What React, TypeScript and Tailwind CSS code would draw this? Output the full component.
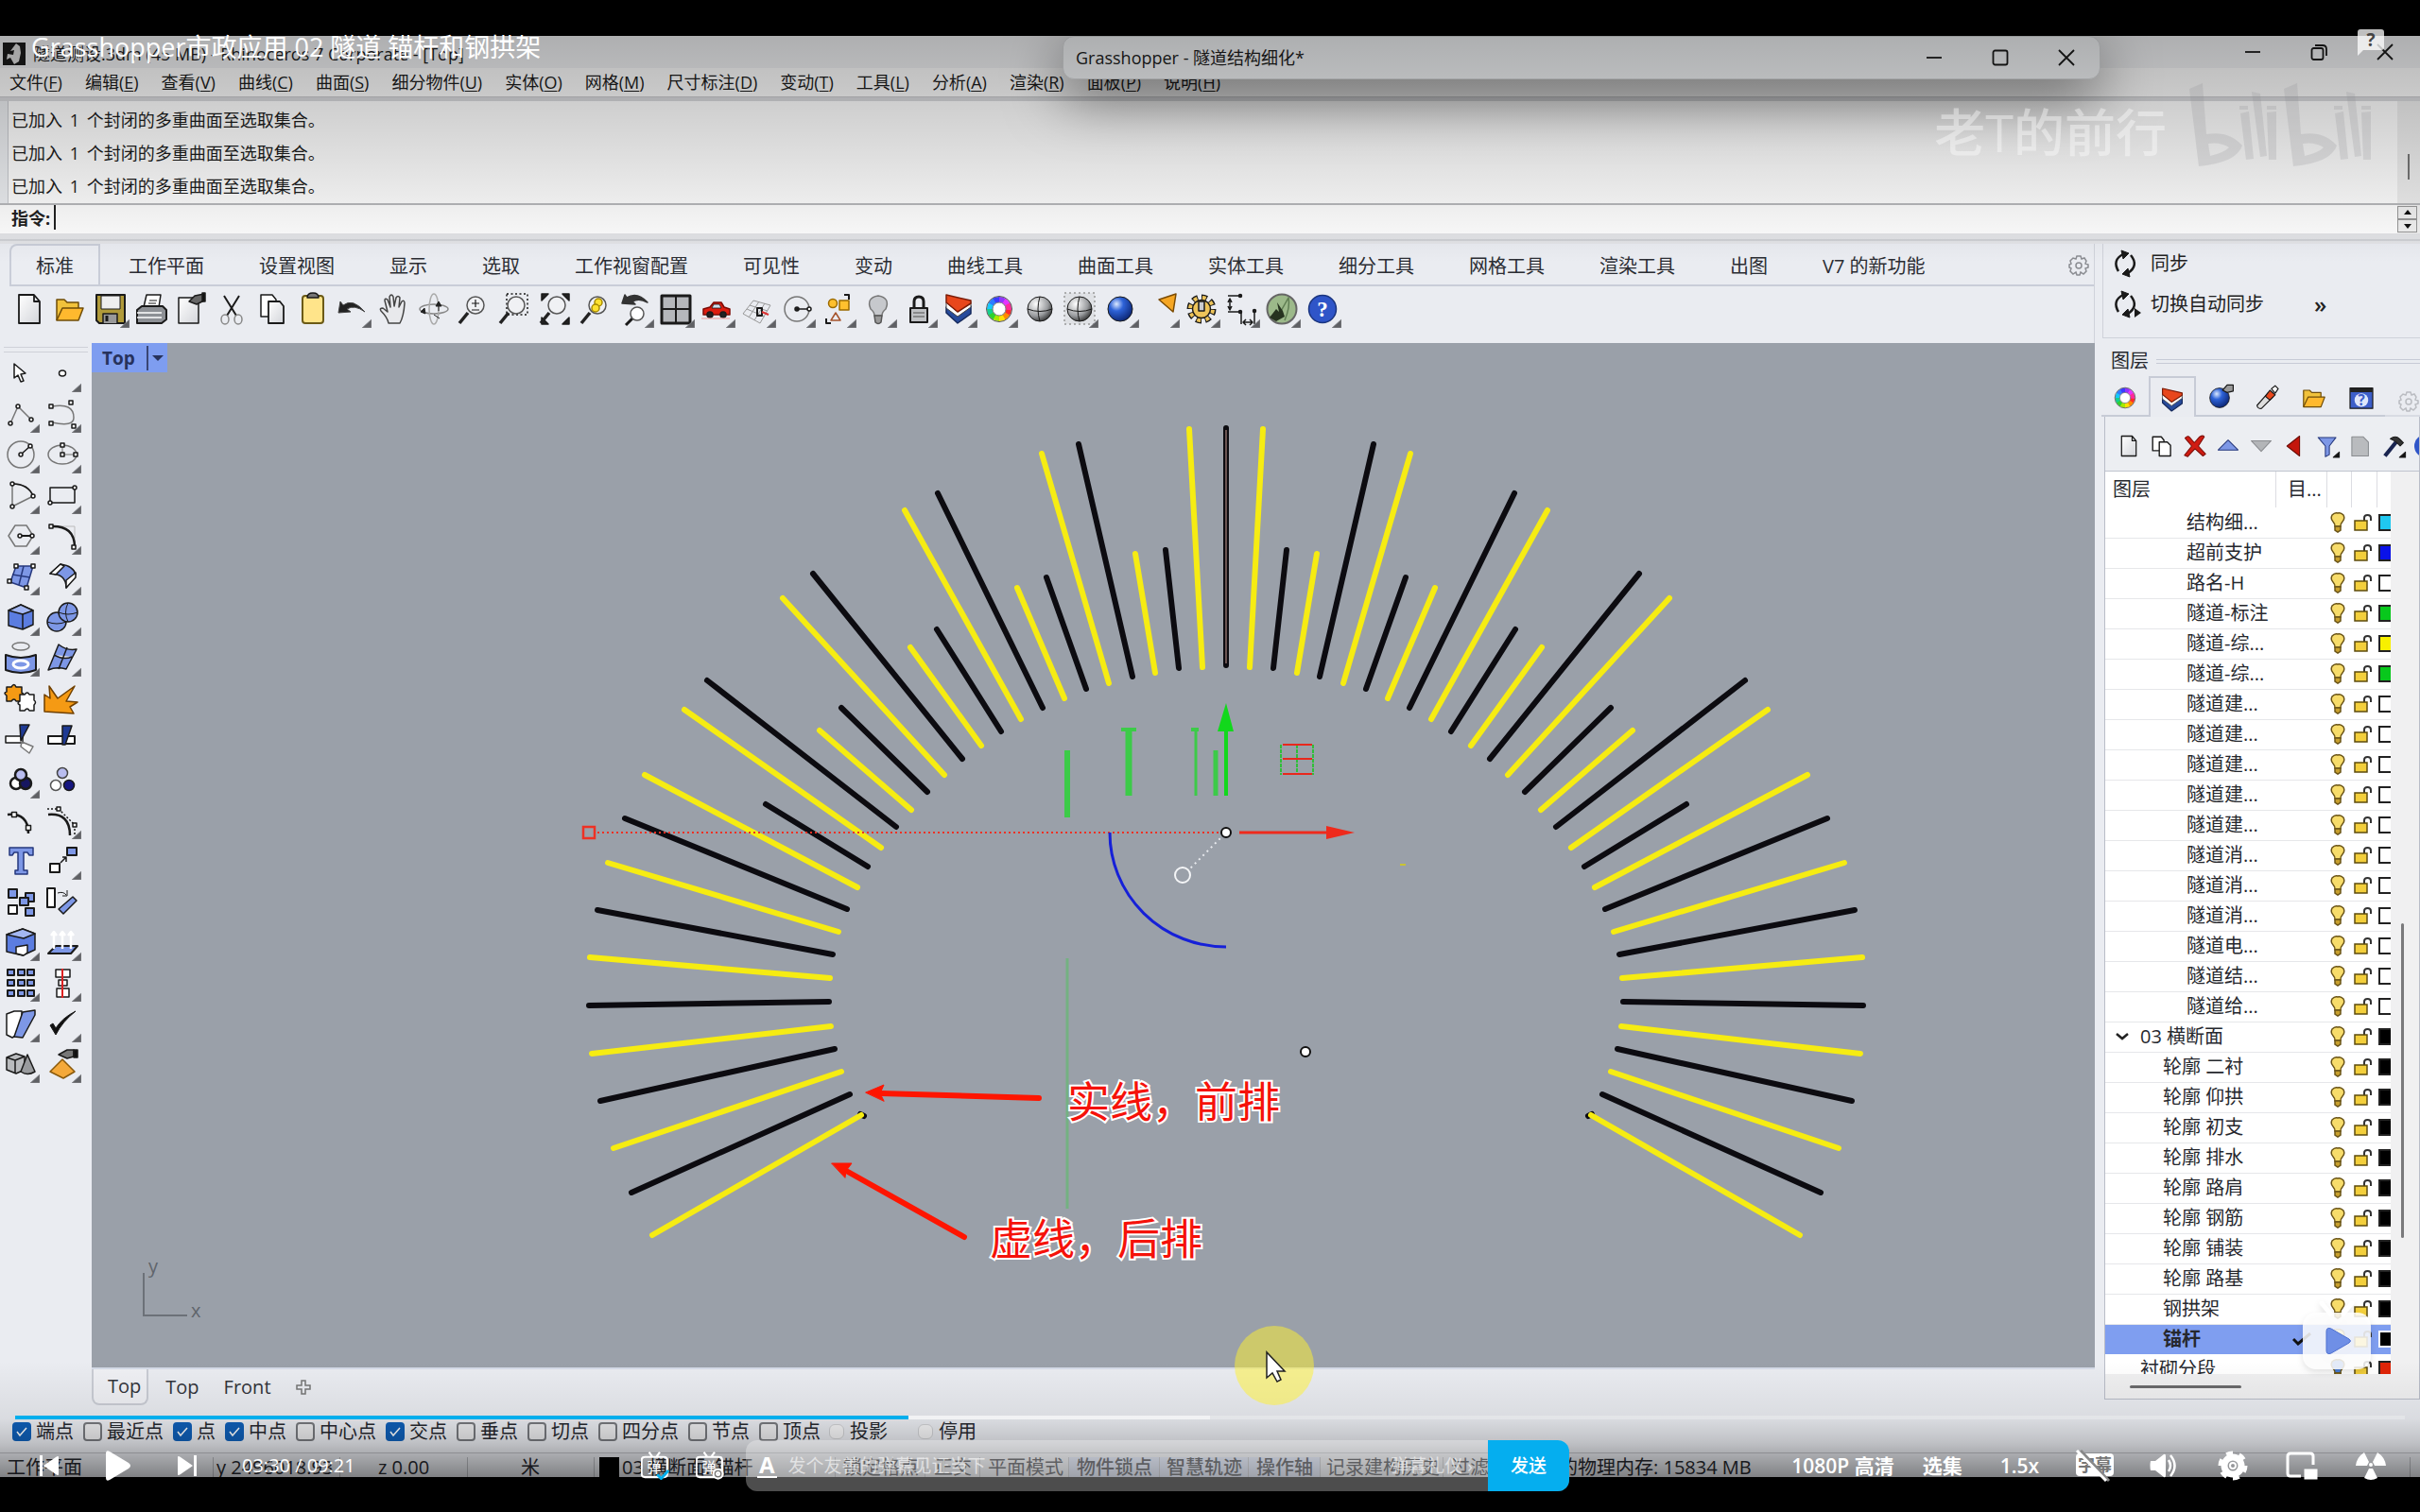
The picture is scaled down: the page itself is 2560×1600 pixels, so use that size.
import React from 'react';

type Kids = { children?: React.ReactNode };

/* ---------- icon helpers ---------- */

function Glyph({ children, corner = false, className = 'size-10' }: Kids & { corner?: boolean; className?: string }) {
  return (
    <svg viewBox="-20 -20 40 40" className={className + ' shrink-0'} fill="none" stroke="#1a1a1a" strokeWidth="1.5" strokeLinejoin="round" aria-hidden="true">
      {children}
      {corner && <path d="M20 11v9H10z" fill="#5f6064" stroke="#8a8b90" strokeWidth=".8" />}
    </svg>
  );
}

const wheel = ['#ff2a2a', '#ff8a00', '#ffe000', '#a6e800', '#2fd12f', '#14cf8f', '#14c8ff', '#2f7dff', '#3b3bff', '#8f35ff', '#e335ff', '#ff2a9a'];
const ColorWheel = () => (
  <>
    {wheel.map((c, i) => (
      <circle key={c} r="10" stroke={c} strokeWidth="6" pathLength={12} strokeDasharray="1.2 10.8" strokeDashoffset={-i} />
    ))}
    <circle r="13.5" stroke="#555" strokeWidth="1" />
    <circle r="7" fill="#fff" stroke="#777" strokeWidth="1" />
  </>
);
const Page = () => <path d="M-11-15H5l6 7v23h-22zM5-15v7h6" fill="url(#paper)" strokeWidth="1.8" />;
const Loupe = () => (
  <>
    <path d="M-6 4l-9 11" stroke="#222" strokeWidth="3.5" />
    <circle cx="2" cy="-4" r="9" fill="#f4f5f7" fillOpacity=".6" stroke="#555" />
  </>
);
const Layers = () => (
  <>
    <path d="M-13-2L-1 7 13-3V5L-1 15-13 4z" fill="#274b9c" stroke="#15295c" />
    <path d="M-13-7L-1 3 13-7V-2L-1 8-13-1z" fill="#fff" stroke="#444" strokeWidth="1" />
    <path d="M-13-15L13-9V-6L-1 3-13-7z" fill="#e8471c" stroke="#7b1c08" />
  </>
);
const Ball = ({ fill }: { fill: string }) => <circle r="13" fill={fill} strokeWidth="1" />;
const GrayBall = () => (
  <>
    <Ball fill="url(#grayBall)" />
    <path d="M-13 0Q0 5 13 0M0-13Q-4 0 0 13" strokeWidth="1" />
  </>
);
const Folder = () => (
  <>
    <path d="M-14 12V-10h8l3 3H9v6" fill="#f1c23b" stroke="#6f4c07" />
    <path d="M-14 12l6-13h22L9 12z" fill="#ffb92e" stroke="#6f4c07" />
  </>
);
const Cog = ({ fill, stroke = '#1a1a1a' }: { fill: string; stroke?: string }) => (
  <>
    <circle r="11.5" stroke={stroke} strokeWidth="8" pathLength={32} strokeDasharray="2.4 1.6" />
    <circle r="11" stroke={fill} strokeWidth="6" pathLength={32} strokeDasharray="1.6 2.4" strokeDashoffset="-.4" />
    <circle r="9.5" fill={fill} />
    <path d="M-3-8h6v10h-6z" fill="#c9cbd0" stroke={stroke} />
  </>
);
const Sq = ({ x, y, s = 4, fill = '#fff' }: { x: number; y: number; s?: number; fill?: string }) => (
  <rect x={x - s / 2} y={y - s / 2} width={s} height={s} fill={fill} />
);
const Dot = ({ x, y }: { x: number; y: number }) => <circle cx={x} cy={y} r="2" fill="#fff" />;

type Tool = [string, boolean, React.ReactNode];

const topTools: Tool[] = [
  ['新建', false, <Page />],
  ['打开', false, <Folder />],
  ['保存', true, <><path d="M-15-15h30v30h-27l-3-3z" fill="#b09a3a" strokeWidth="2" /><path d="M-10-14h20V0h-20z" fill="#eee" strokeWidth="1" /><path d="M-8 15V5h15v10" fill="#999" /><path d="M-4 7v6" strokeWidth="3" /></>],
  ['打印', false, <><path d="M-8-2L-5-15H10L8-2" fill="#fff" /><path d="M-15 1l5-4h22l4 4v10l-5 4h-26z" fill="#8d9095" strokeWidth="2" /><path d="M-15 4H11M-15 9H11" stroke="#fff" /><path d="M-2-9h8M-3-6h8" strokeWidth="1" /></>],
  ['属性', false, <><path d="M-13-12H8v27h-21z" fill="url(#paper)" /><path d="M-2-8l6-6 10-2v7L6-5z" fill="#666" /><path d="M12-17h3v9h-3z" fill="#111" /></>],
  ['剪切', false, <><path d="M-8-14L5 7M8-14L-5 7" strokeWidth="2" /><ellipse cx="-7" cy="11" rx="4" ry="5" stroke="#888" /><ellipse cx="7" cy="11" rx="4" ry="5" stroke="#888" /></>],
  ['复制', false, <><path d="M-12-15H0l4 5V8h-16z" fill="#fff" /><path d="M-4-8H8l4 5v18H-4z" fill="url(#paper)" strokeWidth="1.8" /></>],
  ['粘贴', false, <><rect x="-11" y="-14" width="22" height="29" rx="3" fill="#ffe48a" stroke="#6b5a16" strokeWidth="2" /><path d="M-6-12q0-5 6-5t6 5z" fill="#777" /></>],
  ['撤销', true, <path d="M-15 4l2-12 3 4Q0-12 13 3 2-5-6 0l4 3z" fill="#222" stroke="#444" strokeWidth="1" />],
  ['平移', false, <path d="M-5 15q-1-6-8-13-2-3 2-3l5 4L-9-9q0-3 3-1l3 8-1-11q2-4 4 0L1-3l2-9q2-3 4 0L6-2l3-6q3-2 3 2-1 14-5 21z" fill="#e8e9ec" stroke="#444" />],
  ['旋转视图', false, <><ellipse rx="15" ry="5" stroke="#888" /><ellipse rx="5" ry="16" stroke="#aaa" /><path d="M-9 5l-5-2 4-4zM5-7v9M5-8l-3 5h6zM0 6l6 4" fill="#222" stroke="#222" strokeWidth="1" /></>],
  ['缩放', false, <><Loupe /><path d="M-2-6h8M2-10v8M-2 1h8" strokeWidth="1.2" /></>],
  ['框选缩放', false, <><rect x="-8" y="-16" width="22" height="22" strokeDasharray="2 2.5" /><Loupe /></>],
  ['缩放至范围', false, <><path d="M-14-9v-7h7zM15-9v-7H8zM-14 9v7h7zM15 9v7H8z" fill="#222" /><Loupe /></>],
  ['缩放选取', false, <><Loupe /><circle cx="3" cy="-7" r="4" fill="#ffe12e" stroke="#a78b00" /><circle cx="0" cy="-1" r="4" fill="#ffe12e" stroke="#a78b00" /></>],
  ['视图撤销', true, <><path d="M-14-6l3-9 2 3Q2-19 13-7 4-12-3-8l3 3z" fill="#333" stroke="#333" /><path d="M-3 10l-7 7" strokeWidth="3" /><circle cx="2" cy="5" r="7" fill="#fff" stroke="#555" /></>],
  ['四视图', true, <><rect x="-15" y="-14" width="30" height="29" fill="#b5b7bb" strokeWidth="3" /><path d="M0-14v29M-15 0h30" strokeWidth="2" /></>],
  ['车', true, <><path d="M-14 6V0l7-2 4-5h8l3 5 6 2v6z" fill="#dd1d10" stroke="#7d0a04" /><path d="M-3-5h6l2 4h-10z" fill="#cfe0ee" strokeWidth=".8" /><circle cx="-7" cy="6" r="3" fill="#222" /><circle cx="7" cy="6" r="3" fill="#222" /><path d="M-16 10h30" stroke="#e99" strokeWidth="1" /></>],
  ['工作平面', true, <><path d="M-15 5L-4-9l18 5L3 15zM-11 0L8 8M-8-4l19 6M2-8L-9 9M8-6L-3 12" stroke="#999" strokeWidth="1" /><path d="M0-1h5v8H0z" strokeWidth="2" /><path d="M5 3l7 3" stroke="#d33" strokeWidth="2" /></>],
  ['圆', true, <><circle r="13" stroke="#777" /><circle r="2" fill="#222" /><path d="M0 0h13" /><Dot x={13} y={0} /></>],
  ['物件', true, <><path d="M-12 10v5h5M12-10v-5H7" strokeWidth="2" /><circle cx="-5" cy="-6" r="4.5" fill="#ffc02e" stroke="#9b6a00" /><path d="M2-9h10v10H2z" fill="#ffc02e" stroke="#9b6a00" /><path d="M-2 4l5 8h-10z" stroke="#a5532b" /></>],
  ['显示物件', true, <><path d="M-4 7q0-4-4-7-5-12 8-14 13 2 8 14-4 3-4 7z" fill="#c6c8cc" stroke="#777" /><path d="M-4 7h8l-1 7q-3 3-6 0z" fill="#999" stroke="#555" /></>],
  ['锁定', true, <><path d="M-5 0v-8q0-5 5-5t5 5v8" strokeWidth="3" /><rect x="-9" y="-1" width="18" height="15" fill="#bfc1c4" strokeWidth="2" /><path d="M-6 4H6M-6 8H6" stroke="#777" /></>],
  ['图层', true, <Layers />],
  ['颜色', true, <ColorWheel />],
  ['着色', false, <GrayBall />],
  ['着色选取', true, <><rect x="-16" y="-17" width="32" height="33" stroke="#999" strokeDasharray="2 3" fill="#dfe1e5" /><GrayBall /></>],
  ['渲染', true, <Ball fill="url(#blueBall)" />],
  ['灯光', true, <path d="M-2-10L16-16 13 3z" fill="#f5a623" stroke="#7a4a00" />],
  ['选项', true, <Cog fill="#edc45a" />],
  ['尺寸', true, <><path d="M-14-14h12M-14 3h12M-12-10v9M-14-7l2-4 2 4M-14-3l2 4 2-4M0 3v13M14 3v13M2 14h10M5 11l-3 3 3 3M9 11l3 3-3 3" /><g fill="#222"><circle cx="-1" cy="-14" r="1.5" /><circle cx="-1" cy="3" r="1.5" /><circle cx="14" cy="2" r="1.5" /></g></>],
  ['Grasshopper', true, <><circle r="15.5" fill="#9cb98a" stroke="#666" strokeWidth="2" /><path d="M-2 4L7-12Q9-2 3 12" stroke="#5f7d52" /><path d="M-13 9L-6 0-3 3-5-7 1 2 3 8-6 13z" fill="#26331f" stroke="none" /></>],
  ['说明', true, <><circle r="14.5" fill="#2f55c8" stroke="#1b357f" /><text y="8" textAnchor="middle" fontSize="23" fontWeight="bold" fill="#fff" stroke="none" fontFamily="Liberation Serif">?</text></>],
];

const B = '#7d97e6';
const sideTools: Tool[] = [
  ['选取', false, <path d="M-7-10L-7 5l4-3 3 7 3-1-3-7 5-1z" fill="#fff" />],
  ['点', true, <ellipse rx="3.5" ry="3" fill="#fff" />],
  ['多重直线', true, <><path d="M-11 10L-3-8 11 6" stroke="#777" /><Dot x={-11} y={10} /><Dot x={-3} y={-8} /><Dot x={11} y={6} /></>],
  ['曲线', true, <><path d="M-11-8Q12-12 12 4 12 14-11 9" stroke="#777" /><Sq x={-12} y={-8} /><Sq x={9} y={-12} /><Sq x={-12} y={10} /><Sq x={12} y={13} /></>],
  ['圆', true, <><circle r="14" stroke="#777" /><path d="M0 0L10-9" /><Dot x={0} y={0} /><Dot x={10} y={-9} /></>],
  ['椭圆', true, <><ellipse rx="15" ry="10" stroke="#777" /><path d="M0-10v10h14" stroke="#999" /><Sq x={0} y={-10} /><Sq x={0} y={0} /><Sq x={14} y={0} /></>],
  ['圆弧', true, <><path d="M-9 12v-24Q8-12 13 1z" stroke="#777" /><path d="M-9-12Q8-12 13 1" /><Dot x={-9} y={12} /><Dot x={-9} y={-12} /><Dot x={13} y={1} /></>],
  ['矩形', true, <><rect x="-13" y="-8" width="26" height="16" /><Dot x={-13} y={8} /><Dot x={13} y={-8} /></>],
  ['多边形', true, <><path d="M-13 0l7-11H6l7 11-7 11H-6z" stroke="#777" /><path d="M-1 0h12" strokeWidth="2" /><Dot x={-1} y={0} /><Dot x={12} y={0} /></>],
  ['圆角', true, <><path d="M-12-10h25v20" stroke="#bbb" strokeWidth="1" /><path d="M-12-10Q13-11 13 12" strokeWidth="2.5" /><Sq x={-12} y={-10} /><Sq x={12} y={12} /></>],
  ['曲面', true, <><path d="M-5-11L13-11 6 12-11 6z" fill={B} stroke="#26387d" /><path d="M3-11L-2 9M-9-2L10 1" stroke="#26387d" /><Sq x={-5} y={-11} /><Sq x={13} y={-11} /><Sq x={6} y={12} /><Sq x={-12} y={5} /></>],
  ['放样', true, <><path d="M-13-3L-2-13Q12-11 14-2L4 12Q4-3-13-3z" fill={B} /><path d="M-13-3L-2-13l4 2-9 9zM4 12V4l10-8v5z" fill="#fff" /></>],
  ['立方体', true, <><path d="M-13-7L0-13 13-7V8L2 13-13 9z" fill="#5b7de0" /><path d="M-13-7L0-13 13-7 2-3z" fill="#a3b7f2" /><path d="M2-3v16" /></>],
  ['球体', true, <><circle cx="-6" cy="5" r="10" fill={B} /><circle cx="6" cy="-5" r="10" fill={B} /><path d="M-16 5q10 4 20 0M-4-5q10 4 20 0M6-15q-5 10 0 20" strokeWidth="1" /></>],
  ['投影', true, <><ellipse cy="-12" rx="9" ry="4" stroke="#777" /><path d="M-16-3q16 6 32 0v16q-16 6-32 0z" fill={B} strokeWidth="2" /><ellipse cy="7" rx="8" ry="4" fill={B} stroke="#fff" strokeWidth="3" /></>],
  ['网格', true, <path d="M-4-14Q5-7 15-9L4 12Q-6 9-15 13zM-9-3Q2 3 10-1M5-11L-4 12" fill={B} />],
  ['组合', false, <><path d="M-15-12h5q3-5 5 0h6v6q4 2 0 5v4h-6q-2-4-5 0h-5v-6q-4-3 0-4z" fill="#f59a14" /><path d="M-1-4h5q3-4 5 0h5v6q3 2 0 5v6H9q-2-4-5 0h-5v-6q-4-2 0-4z" fill="#fff" /></>],
  ['炸开', false, <path d="M-19 14v-18l6 4-1-13 9 13L13-13 4 3l12 1-8 5 4 7z" fill="#f59a14" stroke="#704000" />],
  ['修剪', false, <><path d="M-16-3H2v7h-18z" fill="#fff" /><path d="M-1-15h10L0 2z" fill="#1f3a93" /><path d="M1 3l12 5-4 7-9-7z" fill="#fff" stroke="#777" /></>],
  ['分割', false, <><path d="M-15-3h28v8h-28z" fill="#fff" strokeWidth="2" /><path d="M0-14h10L3 6H0z" fill="#1f3a93" /></>],
  ['群组', true, <><circle cx="-5" cy="4" r="6" fill="#fff" strokeWidth="2.5" /><circle cx="5" cy="4" r="6" fill="#161660" strokeWidth="2.5" /><circle cy="-5" r="6" fill="#b9bdf0" strokeWidth="2.5" /></>],
  ['取消群组', false, <><circle cx="-7" cy="6" r="5.5" fill="#fff" stroke="#555" /><circle cx="7" cy="6" r="5.5" fill="#161680" /><circle cy="-7" r="5.5" fill="#b9bdf0" stroke="#444" /></>],
  ['编辑点', false, <><path d="M-14-6Q8-8 8 14" strokeWidth="2.5" /><Sq x={-7} y={-6} s={5} /><Sq x={8} y={8} s={5} /></>],
  ['控制点', true, <><path d="M-15-6Q8-8 8 16" strokeWidth="2.5" /><path d="M-16-12H-4L13 5v12" strokeDasharray="2 2" /><Sq x={-4} y={-12} /><Sq x={13} y={5} /></>],
  ['文字', false, <path d="M-12-14h25v8h-4l-2-3H3v19h4v4H-6v-4h3V-9h-4l-2 3h-3z" fill={B} stroke="#26387d" />],
  ['移动', true, <><rect x="-13" y="3" width="10" height="9" fill="#fff" strokeWidth="2" /><rect x="5" y="-14" width="10" height="8" fill={B} strokeWidth="2" /><path d="M-2 2L4-4M0-4h4v5" /></>],
  ['复制', false, <><rect x="-13" y="-13" width="9" height="9" fill={B} strokeWidth="2" /><rect x="5" y="-9" width="9" height="9" fill={B} strokeWidth="2" /><rect x="-1" y="-4" width="9" height="8" fill={B} strokeWidth="2" /><rect x="-13" y="4" width="9" height="9" fill="#fff" strokeWidth="2" /><rect x="5" y="7" width="9" height="8" fill={B} strokeWidth="2" /></>],
  ['旋转', false, <><rect x="-16" y="-14" width="8" height="20" fill="#fff" strokeWidth="2" /><path d="M-4 8L11-5l4 4L1 13z" fill={B} /><path d="M-5-9q6-2 9 2M5-12v6h-5" strokeWidth="1" /></>],
  ['布尔', true, <><path d="M-15-8L2-14 15-9V8L2 14-15 10z" fill="#5b7de0" /><path d="M-15-8L2-14 15-9 3-4z" fill="#a3b7f2" /><path d="M-5 5L7 3v8l-4 3-8-2z" fill="#fff" /></>],
  ['投影曲线', true, <><path d="M-15 12l8-8h23l-7 8z" fill={B} strokeWidth="2" /><path d="M-9 7v-16M0 7v-16M9 7v-16M-12-7l3-4 3 4M-3-7l3-4 3 4M6-7l3-4 3 4" stroke="#fff" strokeWidth="2.5" /></>],
  ['阵列', true, <>{[-11, 0, 11].map(y => [-11, 0, 10].map(x => <rect key={x + ',' + y} x={x - 3} y={y - 3} width="7" height="6" fill={B} strokeWidth="2" />))}</>],
  ['对齐', true, <><rect x="-7" y="-14" width="15" height="8" fill="#fff" /><rect x="-4" y="-3" width="9" height="6" fill="#fff" /><rect x="-6" y="6" width="13" height="9" fill="#fff" /><path d="M0-15v31" stroke="#d22" strokeWidth="2" /></>],
  ['变形', true, <><path d="M-15-10l8-3h8v22l-10 6-6-3z" fill="#fff" /><path d="M2-12l13-2v5L2 15l-9-1z" fill={B} /></>],
  ['检查', true, <path d="M-13 2l6 10Q0-2 14-13 0-6-7 5l-3-5z" fill="#111" strokeWidth="1" />],
  ['实体', true, <><path d="M-15-7l10-4 9 3v14l-9 4-10-4z" fill="#b9bbbe" /><path d="M-15-7l9 3 10-4M-6-4v14" /><path d="M7-10L15 8Q7 13 0 8z" fill="#999b9e" /></>],
  ['工具', true, <><path d="M-13 8L0-5 13 8 1 15z" fill="#f4a93a" stroke="#8a5a0c" /><path d="M-4-10l9-5h7v7l-7 2z" fill="#777" /><path d="M12-15h4v8h-4z" fill="#111" /></>],
];

/* ---------- viewport drawing ---------- */

// Rod ends measured from the arch's axis of symmetry: outer x, outer y, inner x, inner y.
const blackRods = [
  [139, 265, 108, 483], [339, 70, 216, 498], [413, 316, 322, 521], [664, 161, 422, 555], [667, 412, 518, 600],
  [952, 308, 607, 650], [887, 555, 689, 711], [1196, 505, 761, 776], [1060, 733, 825, 849], [1386, 759, 874, 927],
  [1449, 929, 906, 1011], [1468, 1105, 915, 1098], [1441, 1281, 902, 1185], [1370, 1449, 866, 1269],
];
const yellowRods = [
  [85, 41, 54, 480], [210, 271, 163, 491], [424, 87, 270, 511], [481, 335, 372, 539], [741, 191, 472, 577],
  [727, 444, 564, 625], [1021, 353, 650, 680], [937, 597, 726, 744], [1248, 560, 794, 813], [1340, 679, 850, 887],
  [1424, 842, 892, 968], [1465, 1016, 913, 1054], [1462, 1194, 910, 1142], [1412, 1367, 887, 1227], [1321, 1528, 841, 1307],
];
const AXIS = 1200;
const px = (x: number) => Math.round(x * 0.4592);
const py = (y: number) => Math.round(y * 0.574 + 67);

function Rods({ data, color }: { data: number[][]; color: string }) {
  return (
    <g stroke={color} strokeWidth="6" strokeLinecap="round">
      {data.map(([a, b, c, d]) => (
        <g key={a + '-' + b}>
          <line x1={AXIS - px(a)} y1={py(b)} x2={AXIS - px(c)} y2={py(d)} />
          <line x1={AXIS + px(a)} y1={py(b)} x2={AXIS + px(c)} y2={py(d)} />
        </g>
      ))}
    </g>
  );
}

function Scene() {
  return (
    <svg viewBox="0 0 2119 1082" preserveAspectRatio="xMinYMin meet" className="absolute inset-0 h-full w-full" fill="none" role="img" aria-label="隧道锚杆视图">
      <path d="M813 816l4 2M1587 816l-4 2" stroke="#0c0b10" strokeWidth="6" strokeLinecap="round" />
      <Rods data={blackRods} color="#0c0b10" />
      <Rods data={yellowRods} color="#f6ec12" />
      <path d="M1200 90V341" stroke="#0c0b10" strokeWidth="6" strokeLinecap="round" />
      <path d="M1200 92V339" stroke="#8a6e68" strokeWidth="1.5" />

      <path d="M535 518H1194" stroke="#ee3124" strokeWidth="2" strokeDasharray="2 3" />
      <rect x="520" y="512" width="12" height="12" stroke="#ee3124" strokeWidth="2.5" />
      <path d="M1214 518H1310" stroke="#ee2a1c" strokeWidth="3" />
      <path d="M1306 511L1336 518 1306 525z" fill="#ee2a1c" />
      <path d="M1200 479V405" stroke="#12d81c" strokeWidth="4" />
      <path d="M1191 411L1200 381 1208 411z" fill="#12d81c" />
      <g stroke="#3ccb48">
        <path d="M1032 431V502" strokeWidth="6" />
        <path d="M1097 408V479" strokeWidth="7" />
        <path d="M1089 409H1105M1163 409H1171" strokeWidth="4" />
        <path d="M1168 408V479" strokeWidth="3" />
        <path d="M1189 431V479" strokeWidth="5" />
        <path d="M1032 651V916" strokeWidth="3" strokeOpacity=".4" />
      </g>
      <path d="M1077 518A123 121 0 0 0 1200 639" stroke="#1620d8" strokeWidth="3" />
      <path d="M1198 520L1160 558" stroke="#e8eaee" strokeWidth="2" strokeDasharray="2 4" />
      <circle cx="1154" cy="563" r="8" stroke="#f4f5f7" strokeWidth="2" />
      <circle cx="1200" cy="518" r="5" fill="#fff" stroke="#111" strokeWidth="2" />
      <circle cx="1284" cy="750" r="5" fill="#fff" stroke="#111" strokeWidth="2" />
      <path d="M1258 425V457M1275 425V457M1292 425V457" stroke="#2fbf3a" strokeWidth="2" strokeDasharray="4 1" />
      <path d="M1260 425H1291M1260 440H1291M1260 456H1291" stroke="#e8281c" strokeWidth="2" />
      <path d="M1384 552h6" stroke="#c9c432" strokeWidth="2" />

      <g stroke="#ff1500" strokeWidth="6" strokeLinecap="round" fill="#ff1500">
        <path d="M835 794L1002 799M800 877L923 946" />
        <path d="M819 793L838 785 834 794 838 802zM783 868L804 868 798 876 797 883z" strokeWidth="1" />
      </g>
      <g fontSize="45" fill="#f5120a" stroke="#fff" strokeWidth="4" paintOrder="stroke">
        <text x="1032" y="820">实线，前排</text>
        <text x="950" y="965">虚线，后排</text>
      </g>

      <path d="M55 984V1029H101" stroke="#6c7178" strokeWidth="2" />
      <g fontSize="20" fill="#60656c">
        <text x="60" y="984">y</text>
        <text x="105" y="1031">x</text>
      </g>
    </svg>
  );
}

/* ---------- application chrome ---------- */

const menus = [['文件', 'F'], ['编辑', 'E'], ['查看', 'V'], ['曲线', 'C'], ['曲面', 'S'], ['细分物件', 'U'], ['实体', 'O'], ['网格', 'M'], ['尺寸标注', 'D'], ['变动', 'T'], ['工具', 'L'], ['分析', 'A'], ['渲染', 'R'], ['面板', 'P'], ['说明', 'H']];
const tabs = ['标准', '工作平面', '设置视图', '显示', '选取', '工作视窗配置', '可见性', '变动', '曲线工具', '曲面工具', '实体工具', '细分工具', '网格工具', '渲染工具', '出图', 'V7 的新功能'];

function WindowButtons({ restore = false }: { restore?: boolean }) {
  return (
    <div className="flex items-center">
      {['最小化', restore ? '还原' : '最大化', '关闭'].map((n, i) => (
        <button key={n} aria-label={n} className="flex h-8 w-[70px] items-center justify-center">
          <svg viewBox="0 0 18 18" className="size-[18px]" fill="none" stroke="#1a1a1a" strokeWidth="1.8">
            {i === 0 && <path d="M1 9h16" />}
            {i === 1 && !restore && <rect x="1.5" y="1.5" width="15" height="15" rx="2" />}
            {i === 1 && restore && <><rect x="1.5" y="5" width="12" height="12" rx="2" /><path d="M5 2h8q4 0 4 4v7" /></>}
            {i === 2 && <path d="M1 1l16 16M17 1L1 17" />}
          </svg>
        </button>
      ))}
    </div>
  );
}

function Header() {
  return (
    <header>
      <div className="flex h-[34px] items-center justify-between bg-[#eff0f2]">
        <div className="flex items-center gap-2 pt-1 pl-[3px]">
          <svg viewBox="0 0 24 24" className="size-6"><path d="M0 0h24v24H0z" fill="#1a1a1a" /><path d="M14 1l4 3 1 7-2 9-5 3-4-7-4 2 1-6 6 1 1-5-4 1z" fill="#ddd" /></svg>
          <span className="text-[18px] leading-6 text-[#1c1c1c]">隧道测设.3dm (45 MB) - Rhinoceros 7 Corporate - [Top]</span>
        </div>
        <div className="pr-[2px]"><WindowButtons restore /></div>
      </div>
      <nav className="flex h-[30px] items-center gap-6 bg-[#fbfbfb] pl-[10px]">
        {menus.map(([name, key]) => (
          <button key={name} className="text-[18px] leading-6 whitespace-nowrap text-[#1c1c1c]">{name}(<u className="underline-offset-2">{key}</u>)</button>
        ))}
      </nav>
      <div className="h-[5px] border-t border-[#c9cacc] bg-[#d9dadd]" />
      <div className="flex h-[108px] bg-[#eceef1] pl-2">
        <div className="min-w-0 flex-1 border-l border-[#c8cacf] bg-white pt-[3px] pl-[3px] text-[18px] leading-[35px] text-[#1c1c1c]">
          {[0, 1, 2].map(i => <p key={i}>已加入 <span className="mx-[3px]">1</span> 个封闭的多重曲面至选取集合。</p>)}
        </div>
        <div className="w-6 bg-[#efefef] pt-[56px] pl-[11px]"><div className="h-[27px] w-[2px] bg-[#777]" /></div>
      </div>
      <div className="flex h-8 border-t-2 border-[#b9babd] bg-white pl-2">
        <label htmlFor="cmd" className="pl-1 text-[18px] leading-[28px] font-bold text-[#222]">指令:</label>
        <span className="ml-1 h-[26px] w-[2px] bg-[#222]" />
        <input id="cmd" className="min-w-0 flex-1 bg-transparent outline-none" />
        <div className="w-6 bg-[#f2f2f2] pt-px">
          {['M4 9h8L8 4z', 'M4 5h8L8 10z'].map(d => (
            <button key={d} aria-label="步进" className="flex h-[14px] w-[21px] items-center justify-center border border-[#999]">
              <svg viewBox="0 0 16 14" className="h-[14px] w-4"><path d={d} fill="#111" /></svg>
            </button>
          ))}
        </div>
      </div>
      <div className="h-[11px] bg-[#e3e4e7]"><div className="h-2 border-b-2 border-[#cfd1d5]" /></div>
    </header>
  );
}

function OutlineGear() {
  return (
    <svg viewBox="0 0 24 24" className="size-6" fill="none" stroke="#8b8d92" strokeWidth="1.5">
      <circle cx="12" cy="12" r="3" />
      <path d="M10 2h4l1 3 3-1 2 3-1 3 3 1v3l-3 1 1 3-3 3-3-2-1 3h-3l-1-3-3 2-3-3 1-3-2-1v-3l2-1-1-3 3-3 3 1z" />
    </svg>
  );
}

function Ribbon() {
  return (
    <div className="h-[105px] shrink-0 border-r border-[#cfd2da] pl-[10px]">
      <div className="flex h-[45px] items-end border-b-2 border-[#c9cdd8] pr-1">
        <div className="flex flex-1 gap-[2px]">
          {tabs.map((t, i) => (
            <button key={t} className={(i === 0 ? '-mb-[2px] rounded-tl-lg border-2 border-b-0 border-[#c9cdd8] bg-[#ebedf2] px-[26px] pt-[2px]' : 'px-7 pt-1') + ' h-[43px] text-[20px] leading-6 whitespace-nowrap text-[#2b2d33]'}>{t}</button>
          ))}
        </div>
        <button aria-label="工具列选项" className="mb-2"><OutlineGear /></button>
      </div>
      <div className="flex h-[48px] w-[1410px] items-center">
        {topTools.map(([n, corner, art], i) => (
          <button key={i} aria-label={n} className="flex flex-1 justify-center"><Glyph corner={corner}>{art}</Glyph></button>
        ))}
      </div>
    </div>
  );
}

function Workspace() {
  return (
    <div className="flex min-h-0 flex-1">
      <div className="w-[97px] shrink-0 pt-1">
        <div className="mx-1 h-[6px] border-y border-[#cfd1d8]" />
        <div className="grid w-[88px] grid-cols-2">
          {sideTools.map(([n, corner, art], i) => (
            <button key={i} aria-label={n} className="flex h-[43px] w-[44px] items-center justify-center"><Glyph corner={corner}>{art}</Glyph></button>
          ))}
        </div>
      </div>
      <div className="flex min-w-0 flex-1 flex-col">
        <div className="relative min-h-0 flex-1 bg-[#9aa0a9]">
          <Scene />
          <button className="relative flex h-[31px] items-center bg-[#7e9df0] pr-1 pl-[11px] text-[19px] leading-6 font-bold text-[#27325c]">
            Top
            <span className="ml-3 h-[26px] w-[2px] bg-[#3a4674]" />
            <svg viewBox="0 0 12 8" className="ml-1 h-2 w-3"><path d="M0 1h12L6 7z" fill="#27325c" /></svg>
          </button>
        </div>
        <div className="flex h-[45px] shrink-0 border-t-2 border-[#d5dbe8] text-[20px] leading-6 text-[#33353b]">
          <button className="h-[38px] rounded-b-lg border-2 border-t-0 border-[#c9ccd4] bg-[#eff0f4] pr-[6px] pl-[15px]">Top</button>
          <button className="h-[38px] pl-[18px]">Top</button>
          <button className="h-[38px] pl-[26px]">Front</button>
          <button aria-label="新建视图" className="h-[38px] pl-[26px]">
            <svg viewBox="0 0 16 16" className="size-4" fill="none" stroke="#777" strokeWidth="1.5"><path d="M6 1h4v5h5v4h-5v5H6v-5H1V6h5z" /></svg>
          </button>
        </div>
      </div>
    </div>
  );
}

type Row = [string, number, string];
const rows: Row[] = [
  ['结构细...', 2, '#20c8f0'], ['超前支护', 2, '#0a12e8'], ['路名-H', 2, '#ffffff'], ['隧道-标注', 2, '#08c81c'],
  ['隧道-综...', 2, '#f8f000'], ['隧道-综...', 2, '#08c81c'], ['隧道建...', 2, '#ffffff'], ['隧道建...', 2, '#ffffff'],
  ['隧道建...', 2, '#ffffff'], ['隧道建...', 2, '#ffffff'], ['隧道建...', 2, '#ffffff'], ['隧道消...', 2, '#ffffff'],
  ['隧道消...', 2, '#ffffff'], ['隧道消...', 2, '#ffffff'], ['隧道电...', 2, '#ffffff'], ['隧道结...', 2, '#ffffff'],
  ['隧道给...', 2, '#ffffff'], ['03 横断面', 0, '#000000'], ['轮廓 二衬', 1, '#000000'], ['轮廓 仰拱', 1, '#000000'],
  ['轮廓 初支', 1, '#000000'], ['轮廓 排水', 1, '#000000'], ['轮廓 路肩', 1, '#000000'], ['轮廓 钢筋', 1, '#000000'],
  ['轮廓 铺装', 1, '#000000'], ['轮廓 路基', 1, '#000000'], ['钢拱架', 1, '#000000'], ['锚杆', 1, '#000000'], ['衬砌分段', 0, '#e02408'],
];
const indents = ['pl-[37px]', 'pl-[61px]', 'pl-[86px]'];

const Bulb = ({ fill = '#f7dc6a' }: { fill?: string }) => (
  <svg viewBox="0 0 16 22" className="h-[22px] w-4" fill={fill} stroke="#6b5518" strokeWidth="1.5">
    <path d="M5 15q0-3-2-5Q0 7 2 3q3-3 6-2 3-1 6 2 2 4-1 7-2 2-2 5z" /><path d="M5 15h6v4l-3 2-3-2z" fill="#c79f2d" />
  </svg>
);
const Unlock = () => (
  <svg viewBox="0 0 20 20" className="size-5"><path d="M11 9V5q0-3 3.500-3T18 5v3" fill="none" stroke="#333" strokeWidth="2" /><path d="M1 8h13v10H1z" fill="#f3cf3c" stroke="#5d4c0e" strokeWidth="1.5" /></svg>
);

function LayerTable() {
  return (
    <div className="flex min-h-0 flex-1 bg-[#f0f0f1]">
      <div className="min-w-0 flex-1 overflow-hidden bg-white">
        <table className="w-full table-fixed border-collapse text-[20px] leading-6 text-[#26282e]">
          <thead>
            <tr className="h-[38px]">
              <th className="w-[180px] border-r border-[#dcdde2] pl-2 text-left font-normal">图层</th>
              <th className="w-[54px] border-r border-[#dcdde2] pl-2 font-normal">目...</th>
              <th className="w-[26px] border-r border-[#dcdde2]" aria-label="打开" />
              <th className="w-[27px] border-r border-[#dcdde2]" aria-label="锁定" />
              <th aria-label="颜色" />
            </tr>
          </thead>
          <tbody>
            {rows.map(([name, level, color], i) => {
              const selected = name === '锚杆';
              return (
                <tr key={i} className={'h-8 ' + (selected ? 'bg-[#7f9ef0]' : 'border-b border-[#e6e7ea]')}>
                  <td className={'p-0 whitespace-nowrap ' + indents[level] + (selected ? ' font-semibold' : '')}>
                    {name === '03 横断面' && (
                      <svg viewBox="0 0 14 8" className="-ml-[26px] mr-3 mb-1 inline h-2 w-[14px]" fill="none" stroke="#222" strokeWidth="2.5"><path d="M1 1l6 5 6-5" /></svg>
                    )}
                    {name}
                  </td>
                  <td className="p-0">
                    {selected && <svg viewBox="0 0 20 14" className="ml-[18px] h-[14px] w-5" fill="none" stroke="#111" strokeWidth="3"><path d="M1 7l5 5L19 1" /></svg>}
                  </td>
                  <td className="p-0 pl-1"><Bulb fill={name === '衬砌分段' ? '#4a7fd8' : '#f7dc6a'} /></td>
                  <td className="p-0 pl-[3px]"><Unlock /></td>
                  <td className="p-0 pl-[2px]">
                    <span className={'block h-[18px] border-2 border-r-0 ' + (selected ? 'border-white' : 'border-[#222]')} style={{ backgroundColor: color }} />
                  </td>
                </tr>
              );
            })}
          </tbody>
        </table>
      </div>
      <div className="w-[30px] pt-[478px] pl-[11px]"><div className="h-[333px] w-[3px] rounded bg-[#7a7a7c]" /></div>
    </div>
  );
}

function SidePanel() {
  const iconTabs: React.ReactNode[] = [
    <ColorWheel />, <Layers />,
    <><Ball fill="url(#blueBall)" /><path d="M4-10l6-7h8v8l-8 2z" fill="#999" /></>,
    <><path d="M-13 10l15-17 6 6-15 15q-5 1-6-4z" fill="#ddd" /><path d="M-2-2l6-8 7 6-7 7z" fill="#e8471c" /><path d="M6-12l5-4 4 4-4 6z" fill="#fff" /></>,
    <Folder />,
    <><rect x="-15" y="-13" width="30" height="27" fill="#3d5ec9" /><path d="M-15-10h30" stroke="#222" strokeWidth="5" /><circle cy="3" r="9" fill="#dfe6fa" stroke="none" /><text y="10" textAnchor="middle" fontSize="19" fontWeight="bold" fill="#3d5ec9" stroke="none">?</text></>,
  ];
  const actions: React.ReactNode[] = [
    <Page />,
    <><path d="M-14-14H-1l4 5V7h-17z" fill="#fff" strokeWidth="2" /><path d="M-4-6H8l5 5v16H-4z" fill="#fff" strokeWidth="2" /></>,
    <path d="M-15-12q4-5 7-1l7 8 8-9q5-3 7 0L5 0l11 12-4 3L0 4-11 16l-5-2L-5 0z" fill="#d01c12" stroke="#7c0d07" />,
    <path d="M-15 6L0-9 15 6z" fill={B} stroke="#26387d" />,
    <path d="M-15-8L0 8 15-8z" fill="#b3b5b8" stroke="#8a8c90" />,
    <path d="M8-15v30L-11 0z" fill="#c4160c" stroke="#6b0a04" />,
    <><path d="M-14-13h27L3 0v13l-6 3V0z" fill={B} stroke="#26387d" /><path d="M18 9v8h-9z" fill="#111" /></>,
    <path d="M-13-14H4l8 8v21h-25z" fill="#b9bbbe" stroke="#8a8c90" />,
    <><path d="M-13 15L4-6" stroke="#1a2550" strokeWidth="6" /><path d="M-5-11q8-6 14 0l6 6-5 5L3-7z" fill="#333" /><path d="M18 9v8h-9z" fill="#111" /></>,
  ];
  return (
    <aside className="flex w-[344px] shrink-0 flex-col pb-[11px] pl-1">
      <div className="ml-1 h-[100px] shrink-0 border-b border-l border-[#cfd2da]">
        <div className="ml-2 flex h-[42px] items-center">
          <SyncIcon /><button className="ml-[10px] text-[20px] leading-6 text-[#222]">同步</button>
        </div>
        <div className="ml-2 flex h-[43px] items-center">
          <SyncIcon play /><button className="ml-[10px] text-[20px] leading-6 text-[#222]">切换自动同步</button>
          <button aria-label="更多" className="ml-[53px] text-[24px] leading-6 font-semibold text-[#222]">»</button>
        </div>
      </div>
      <div className="flex h-[40px] shrink-0 items-center gap-2 pt-2 pl-[13px]">
        <h2 className="text-[20px] leading-6 text-[#26282e]">图层</h2>
        <div className="h-[5px] flex-1 border-y border-[#c7cbd6]" />
      </div>
      <div className="flex h-[43px] shrink-0 pl-[3px]">
        {iconTabs.map((art, i) => (
          <button key={i} aria-label={'面板 ' + (i + 1)} className={(i === 1 ? 'border-2 border-b-0 border-[#c7cbd6]' : 'border-b-2 border-[#c7cbd6]') + ' flex w-[50px] items-center justify-center pt-1'}><Glyph className="size-8">{art}</Glyph></button>
        ))}
        <button aria-label="面板选项" className="flex flex-1 items-center justify-end border-b-2 border-[#c7cbd6] pt-3 opacity-50"><OutlineGear /></button>
      </div>
      <div className="ml-[6px] flex min-h-0 flex-1 flex-col border border-t-0 border-[#b9bdc8] bg-[#eceef2]">
        <div className="flex h-[58px] shrink-0 items-center overflow-hidden border-b border-[#c0c4ce] pt-1 pl-[7px]">
          {actions.map((art, i) => (
            <button key={i} aria-label={'图层操作 ' + (i + 1)} className="flex w-[35px] shrink-0 justify-center"><Glyph className="size-7">{art}</Glyph></button>
          ))}
          <button aria-label="图层说明" className="ml-[5px] size-6 shrink-0 rounded-full bg-[#2f55c8]" />
        </div>
        <LayerTable />
        <div className="flex h-[26px] shrink-0 items-center bg-[#f0f0f1] pl-[26px]"><div className="h-[3px] w-[118px] rounded bg-[#6a6a6c]" /></div>
      </div>
    </aside>
  );
}

function SyncIcon({ play = false }: { play?: boolean }) {
  return (
    <svg viewBox="0 0 32 32" className="size-8" fill="none" stroke="#1a1a1a" strokeWidth="2.5">
      <path d="M8 24Q1 12 13 6M21 7q9 11-3 19" />
      <path d="M11 2l8 3-6 6zM20 30l-8-3 6-6z" fill="#1a1a1a" strokeWidth="1" />
      {play && <path d="M25 20l7 5-7 5z" fill="#1a1a1a" stroke="none" />}
    </svg>
  );
}

const snaps: [string, boolean][] = [['端点', true], ['最近点', false], ['点', true], ['中点', true], ['中心点', false], ['交点', true], ['垂点', false], ['切点', false], ['四分点', false], ['节点', false], ['顶点', false]];

function SnapBar() {
  return (
    <div className="flex h-[45px] shrink-0 items-center gap-[10px] pl-[13px] text-[20px] leading-6 text-[#26282e]">
      {snaps.map(([n, on]) => (
        <label key={n} className="flex items-center gap-[5px] whitespace-nowrap">
          <input type="checkbox" defaultChecked={on} className="peer sr-only" />
          <span className="flex size-5 items-center justify-center rounded border-2 border-[#77797e] bg-[#ececee] text-transparent peer-checked:border-[#0f5fb8] peer-checked:bg-[#0f5fb8] peer-checked:text-white">
            <svg viewBox="0 0 14 12" className="h-3 w-[14px]" fill="none" stroke="currentColor" strokeWidth="1.5"><path d="M2 6l3 4 7-8" /></svg>
          </span>
          {n}
        </label>
      ))}
      {['投影', '停用'].map((n, i) => (
        <label key={n} className={(i ? 'ml-[22px]' : '-ml-[1px]') + ' flex items-center gap-[6px] whitespace-nowrap'}>
          <input type="checkbox" className="size-4 appearance-none rounded-md border border-[#d0d1d4] bg-[#f6f6f7]" />{n}
        </label>
      ))}
    </div>
  );
}

function StatusBar() {
  const cell = 'flex h-full items-center overflow-hidden border-r border-[#b8babf] whitespace-nowrap ';
  return (
    <footer className="flex h-[26px] shrink-0 items-center overflow-hidden border-t border-[#bfc1c6] pt-1 text-[20px] leading-6 text-[#26282e]">
      <span className={cell + 'w-[226px] pl-[7px]'}>工作平面</span>
      <span className={cell + 'w-[134px] pl-[3px]'}>y 2496018.93</span>
      <span className={cell + 'w-[135px] pl-10'}>z 0.00</span>
      <span className={cell + 'w-[134px] pl-14'}>米</span>
      <span className={cell + 'w-[255px] gap-[3px] pl-[5px]'}><i className="size-[21px] bg-black" />03 横断面::锚杆</span>
      <button className={cell + 'w-[95px] pl-2'}>锁定格点</button>
      <button className={cell + 'w-[58px] pl-[9px]'}>正交</button>
      <button className={cell + 'w-[94px] pl-2'}>平面模式</button>
      <button className={cell + 'w-[96px] bg-[#d7e0f6] pl-2 font-medium'}>物件锁点</button>
      <button className={cell + 'w-[94px] bg-[#d7e0f6] pl-[7px] font-medium'}>智慧轨迹</button>
      <button className={cell + 'w-[76px] bg-[#d7e0f6] pl-2 font-medium'}>操作轴</button>
      <button className={cell + 'w-[130px] pl-[6px]'}>记录建构历史</button>
      <button className={cell + 'w-[78px] pl-2'}>过滤器</button>
      <span className={cell + 'mr-[10px] flex-1 pl-1'}>可用的物理内存: 15834 MB</span>
    </footer>
  );
}

/* ---------- floating and player layers ---------- */

function GrasshopperWindow() {
  return (
    <section className="absolute top-0 right-[338px] flex h-[46px] w-[1098px] items-center justify-between rounded-xl border border-[#d0d2d4] bg-[#eef0f2] pl-[13px] shadow-[0_18px_60px_rgba(0,0,0,0.55)]">
      <h1 className="text-[18px] leading-6 text-[#1c1c1c]">Grasshopper - 隧道结构细化*</h1>
      <WindowButtons />
    </section>
  );
}

function Watermark() {
  return (
    <div className="absolute top-[50px] right-[46px] flex items-center gap-6">
      <span className="pt-4 text-[54px] leading-[64px] font-medium text-white/40">老T的前行</span>
      <svg viewBox="0 0 198 88" className="h-[88px] w-[198px]" fill="#8d8f92" fillOpacity=".22">
        {[0, 100].map(x => (
          <g key={x} transform={`translate(${x} 0)`}>
            <path fillRule="evenodd" d="M0 6L14 0l4 54q24-4 38 12-6 18-46 22zM20 64l2 13q14-3 20-9-9-6-22-4z" />
            <path d="M54 32l9-2 5 50-8 1zM66 9l9 2 7 66-7 1zM53 24h9v4h-9zM82 31l10-1v51h-8zM82 24h10v4H82z" />
          </g>
        ))}
      </svg>
    </div>
  );
}

const danmu = 'M6 8h28q5 0 5 5v20q0 5-5 5H6q-5 0-5-5V13q0-5 5-5zM12 1l5 7M28 1l-5 7';

function Player() {
  const ctl = 'flex h-12 w-[73px] items-center justify-center';
  return (
    <div className="absolute inset-x-0 bottom-0">
      <div className="relative mx-4 h-1 bg-white/25">
        <div className="absolute inset-y-0 left-0 w-[50%] bg-white/50" />
        <div className="absolute inset-y-0 left-0 w-[37.4%] bg-[#00aeec]" />
        <input type="range" aria-label="播放进度" defaultValue={37} className="absolute inset-0 h-1 w-full opacity-0" />
      </div>
      <div className="flex h-[98px] items-center px-4 text-white">
        <div className="flex flex-[648] items-center">
          <button aria-label="上一个" className="flex w-[72px] justify-center"><svg viewBox="0 0 22 22" className="size-[22px]" fill="#fff"><path d="M1 0h3v22H1zM21 2v18q0 2-3 0L5 11 18 2q3-2 3 0z" /></svg></button>
          <button aria-label="播放" className="flex w-[74px] justify-center"><svg viewBox="0 0 28 32" className="h-8 w-7" fill="#fff"><path d="M1 3q0-4 4-2l20 12q4 3 0 6L5 31q-4 2-4-2z" /></svg></button>
          <button aria-label="下一个" className="flex w-[72px] justify-center"><svg viewBox="0 0 22 22" className="size-[22px]" fill="#fff"><path d="M18 0h3v22h-3zM1 2v18q0 2 3 0l13-9L4 2Q1 0 1 2z" /></svg></button>
          <span className="ml-[22px] text-[20px] leading-6 whitespace-nowrap">03:30 / 09:21</span>
        </div>
        <button aria-label="弹幕开关" className="flex w-[58px] justify-center">
          <svg viewBox="0 0 42 42" className="size-[30px]" fill="none" stroke="#fff" strokeWidth="3"><path d={danmu} /><text x="9" y="31" fontSize="21" fill="#fff" stroke="none">弹</text><path d="M24 34l6 6 11-12" stroke="#00aeec" strokeWidth="4" /></svg>
        </button>
        <button aria-label="弹幕设置" className="flex w-[58px] justify-center">
          <svg viewBox="0 0 42 42" className="size-[30px]" fill="none" stroke="#fff" strokeWidth="3"><path d={danmu} /><text x="9" y="31" fontSize="21" fill="#fff" stroke="none">弹</text><circle cx="33" cy="33" r="7" fill="#777" /><circle cx="33" cy="33" r="2" /></svg>
        </button>
        <div className="ml-[9px] flex h-[54px] w-[871px] items-center overflow-hidden rounded-xl bg-white/30">
          <button aria-label="弹幕样式" className="ml-3 text-[24px] leading-[24px] font-bold"><span className="block border-b-2 border-white px-[2px]">A</span></button>
          <input aria-label="弹幕" placeholder="发个友善的弹幕见证当下" className="ml-3 min-w-0 flex-1 bg-transparent text-[19px] leading-6 outline-none placeholder:text-white/60" />
          <a href="#etiquette" className="mr-4 text-[19px] leading-6 text-white/60">弹幕礼仪 ›</a>
          <button className="h-full w-[86px] bg-[#05aeef] text-[19px] leading-6 font-medium">发送</button>
        </div>
        <div className="flex flex-[884] items-center justify-end text-[21px] leading-6 font-semibold whitespace-nowrap">
          <button className="mr-[30px]">1080P 高清</button>
          <button className="mr-10">选集</button>
          <button className="mr-[22px]">1.5x</button>
          <button aria-label="字幕" className={ctl}>
            <svg viewBox="0 0 44 34" className="h-[34px] w-11"><rect x="2" y="4" width="40" height="24" rx="4" fill="#fff" /><text x="4" y="23" fontSize="18" fill="#777">字幕</text><path d="M7 1L37 33" stroke="#888" strokeWidth="3" /><path d="M3 1L34 33" stroke="#fff" strokeWidth="3" /></svg>
          </button>
          <button aria-label="音量" className={ctl}>
            <svg viewBox="0 0 30 28" className="h-7 w-[30px]" fill="#fff"><path d="M1 9h5l9-7q2-1 2 2v20q0 3-2 2l-9-7H1q-1-5 0-10z" /><path d="M20 8q4 6 0 12M22 3q9 11 0 22" fill="none" stroke="#fff" strokeWidth="2.5" /></svg>
          </button>
          <button aria-label="设置" className={ctl}>
            <svg viewBox="0 0 32 32" className="size-8" fill="none" stroke="#fff"><circle cx="16" cy="16" r="9" strokeWidth="7" /><circle cx="16" cy="16" r="13" strokeWidth="5" pathLength={12} strokeDasharray="1 1" /><circle cx="16" cy="16" r="3" strokeWidth="2" /></svg>
          </button>
          <button aria-label="画中画" className={ctl}>
            <svg viewBox="0 0 34 30" className="h-[30px] w-[34px]" fill="none" stroke="#fff" strokeWidth="3"><path d="M16 26H5q-3 0-3-3V5q0-3 3-3h21q3 0 3 3v9" /><rect x="21" y="20" width="11" height="8" fill="#fff" /></svg>
          </button>
          <button aria-label="更多" className={ctl}>
            <svg viewBox="0 0 32 30" className="h-[30px] w-8" fill="#fff"><path d="M9 1l5 10-2 4H0Q1 6 9 1zM23 1l-5 10 2 4h12Q31 6 23 1zM14 18h4l5 10q-7 4-14 0z" /><circle cx="16" cy="14" r="2" /></svg>
          </button>
        </div>
      </div>
    </div>
  );
}

export default function App() {
  return (
    <div className="relative flex h-screen w-full flex-col overflow-hidden bg-black pt-[38px] pb-[37px] font-['Open_Sans','Noto_Sans_CJK_SC',sans-serif]">
      <svg className="absolute size-0" aria-hidden="true">
        <defs>
          <linearGradient id="paper" x1="0" x2="1" y1="0" y2="1"><stop offset="0" stopColor="#fff" /><stop offset="1" stopColor="#d3d5da" /></linearGradient>
          <radialGradient id="grayBall" cx=".35" cy=".3" r=".8"><stop offset="0" stopColor="#fff" /><stop offset=".6" stopColor="#9a9c9f" /><stop offset="1" stopColor="#222" /></radialGradient>
          <radialGradient id="blueBall" cx=".35" cy=".3" r=".8"><stop offset="0" stopColor="#dbe8ff" /><stop offset=".35" stopColor="#2e63d8" /><stop offset="1" stopColor="#071d66" /></radialGradient>
        </defs>
      </svg>

      <main className="relative flex min-h-0 flex-1 flex-col overflow-hidden bg-[#eaecf1]">
        <Header />
        <div className="flex min-h-0 flex-1">
          <div className="flex min-w-0 flex-1 flex-col"><Ribbon /><Workspace /></div>
          <SidePanel />
        </div>
        <SnapBar />
        <StatusBar />
        <GrasshopperWindow />
        <div className="pointer-events-none absolute inset-x-0 top-0 h-[240px] bg-linear-to-b from-black/27 to-transparent" />
        <div className="pointer-events-none absolute inset-x-0 bottom-0 h-[123px] bg-[linear-gradient(to_bottom,transparent,rgba(0,0,0,0.07)_50%,rgba(0,0,0,0.18)_70%,rgba(0,0,0,0.45))]" />
        <Watermark />
        <svg viewBox="0 0 84 84" className="absolute right-[1170px] bottom-[76px] size-[84px]" aria-hidden="true">
          <circle cx="42" cy="42" r="42" fill="#fff22e" fillOpacity=".5" />
          <path d="M34 28v27l6-5 5 9 4-2-4-9h8z" fill="#fff" stroke="#222" strokeWidth="1.5" />
        </svg>
        <button aria-label="小窗播放" className="absolute right-[51px] bottom-[112px]">
          <svg viewBox="0 0 74 74" className="size-[74px] drop-shadow-md"><path d="M21 2l9 11M53 2l-9 11" stroke="#fff" strokeWidth="5" strokeLinecap="round" /><rect x="1" y="12" width="72" height="60" rx="14" fill="#fff" fillOpacity=".85" /><path d="M26 32q0-5 5-3l19 11q3 2 0 4L31 55q-5 2-5-3z" fill="#6f8fe6" stroke="#4d6fcf" /></svg>
        </button>
      </main>

      <h2 className="absolute top-8 left-[33px] text-[27px] leading-9 text-white">Grasshopper市政应用 02 隧道 锚杆和钢拱架</h2>
      <button aria-label="帮助" className="absolute top-[31px] right-[38px]">
        <svg viewBox="0 0 28 28" className="size-7"><path d="M3 0h22q3 0 3 3v16q0 3-3 3H6l-6 6V3q0-3 3-3z" fill="#fff" fillOpacity=".75" /><text x="14" y="18" textAnchor="middle" fontSize="19" fontWeight="bold" fill="#444">?</text></svg>
      </button>
      <Player />
    </div>
  );
}
